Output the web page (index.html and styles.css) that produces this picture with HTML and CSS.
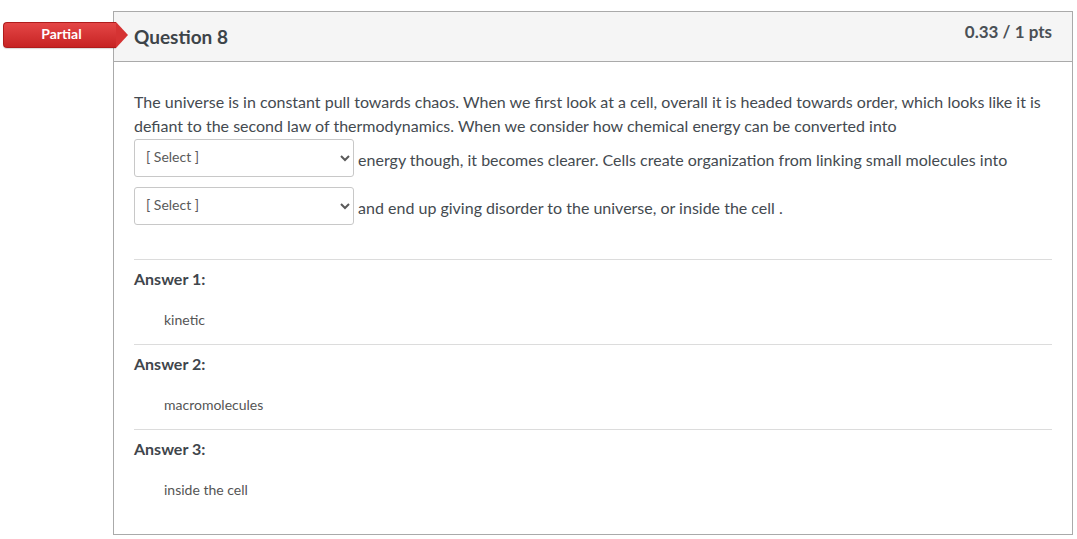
FILE: index.html
```html
<!DOCTYPE html>
<html>
<head>
<meta charset="utf-8">
<link rel="stylesheet" href="styles.css">
</head>
<body>
<div class="page">
  <div class="badge"><span class="badge-text">Partial</span><span class="badge-tip"></span></div>
  <div class="card">
    <div class="card-header">
      <h2 class="q-title">Question 8</h2>
      <div class="q-points">0.33 / 1 pts</div>
    </div>
    <div class="card-body">
      <p class="q-text">The universe is in constant pull towards chaos. When we first look at a cell, overall it is headed towards order, which looks like it is defiant to the second law of thermodynamics. When we consider how chemical energy can be converted into <select class="sel"><option>[ Select ]</option></select> energy though, it becomes clearer. Cells create organization from linking small molecules into <select class="sel"><option>[ Select ]</option></select> and end up giving disorder to the universe, or inside the cell .</p>
      <div class="answers">
        <div class="answer">
          <div class="a-label">Answer 1:</div>
          <div class="a-value">kinetic</div>
        </div>
        <div class="answer">
          <div class="a-label">Answer 2:</div>
          <div class="a-value">macromolecules</div>
        </div>
        <div class="answer">
          <div class="a-label">Answer 3:</div>
          <div class="a-value">inside the cell</div>
        </div>
      </div>
    </div>
  </div>
</div>
</body>
</html>
```
FILE: styles.css
```css
* { box-sizing: border-box; }
html, body { margin: 0; padding: 0; background: #fff; }
body { font-family: Lato, "Open Sans", sans-serif; color: #444a50; }
.page { position: relative; padding: 11px 0 0 113px; }
.card { width: 960px; border: 1px solid #aaaaaa; background: #fff; height: 524px; }
.card-header { height: 50px; background: #f5f5f5; border-bottom: 1px solid #aaaaaa; display: flex; justify-content: space-between; align-items: flex-start; padding: 0 20px 0 20px; }
.q-title { margin: 13px 0 0; font-size: 19px; font-weight: 700; line-height: 24px; color: #3d4449; }
.q-points { margin-top: 9px; font-size: 17px; font-weight: 700; line-height: 22px; color: #4a5056; }
.card-body { padding: 28px 20px 0 20px; }
.q-text { margin: 0; font-size: 16px; line-height: 24px; }
.sel { width: 220px; height: 38px; margin: 1px 0 9px; vertical-align: middle; font-family: Lato, sans-serif; font-size: 14px; color: #5a5a5a; background: #fff; border: 1px solid #c8c8c8; border-radius: 3px; padding: 0 7px 3px; }
.answers { margin-top: 25px; }
.answer { border-top: 1px solid #dcdcdc; height: 85px; padding-top: 9px; }
.a-label { font-size: 16px; font-weight: 700; line-height: 20px; color: #3f464c; }
.a-value { margin-top: 21px; padding-left: 30px; font-size: 14px; line-height: 20px; color: #555; }
.badge { position: absolute; left: 3px; top: 22px; width: 125px; height: 26px; display: flex; }
.badge-text { width: 113px; height: 26px; background: linear-gradient(#e44646, #c72424); border: 1px solid #b01c1c; border-right: none; border-radius: 4px 0 0 4px; color: #fff; font-weight: 700; font-size: 14px; line-height: 22px; text-align: center; padding-left: 3px; box-shadow: 0 1px 1px rgba(0,0,0,0.15); }
.badge-tip { width: 0; height: 0; border-top: 13px solid transparent; border-bottom: 13px solid transparent; border-left: 12px solid #d53333; }
```
